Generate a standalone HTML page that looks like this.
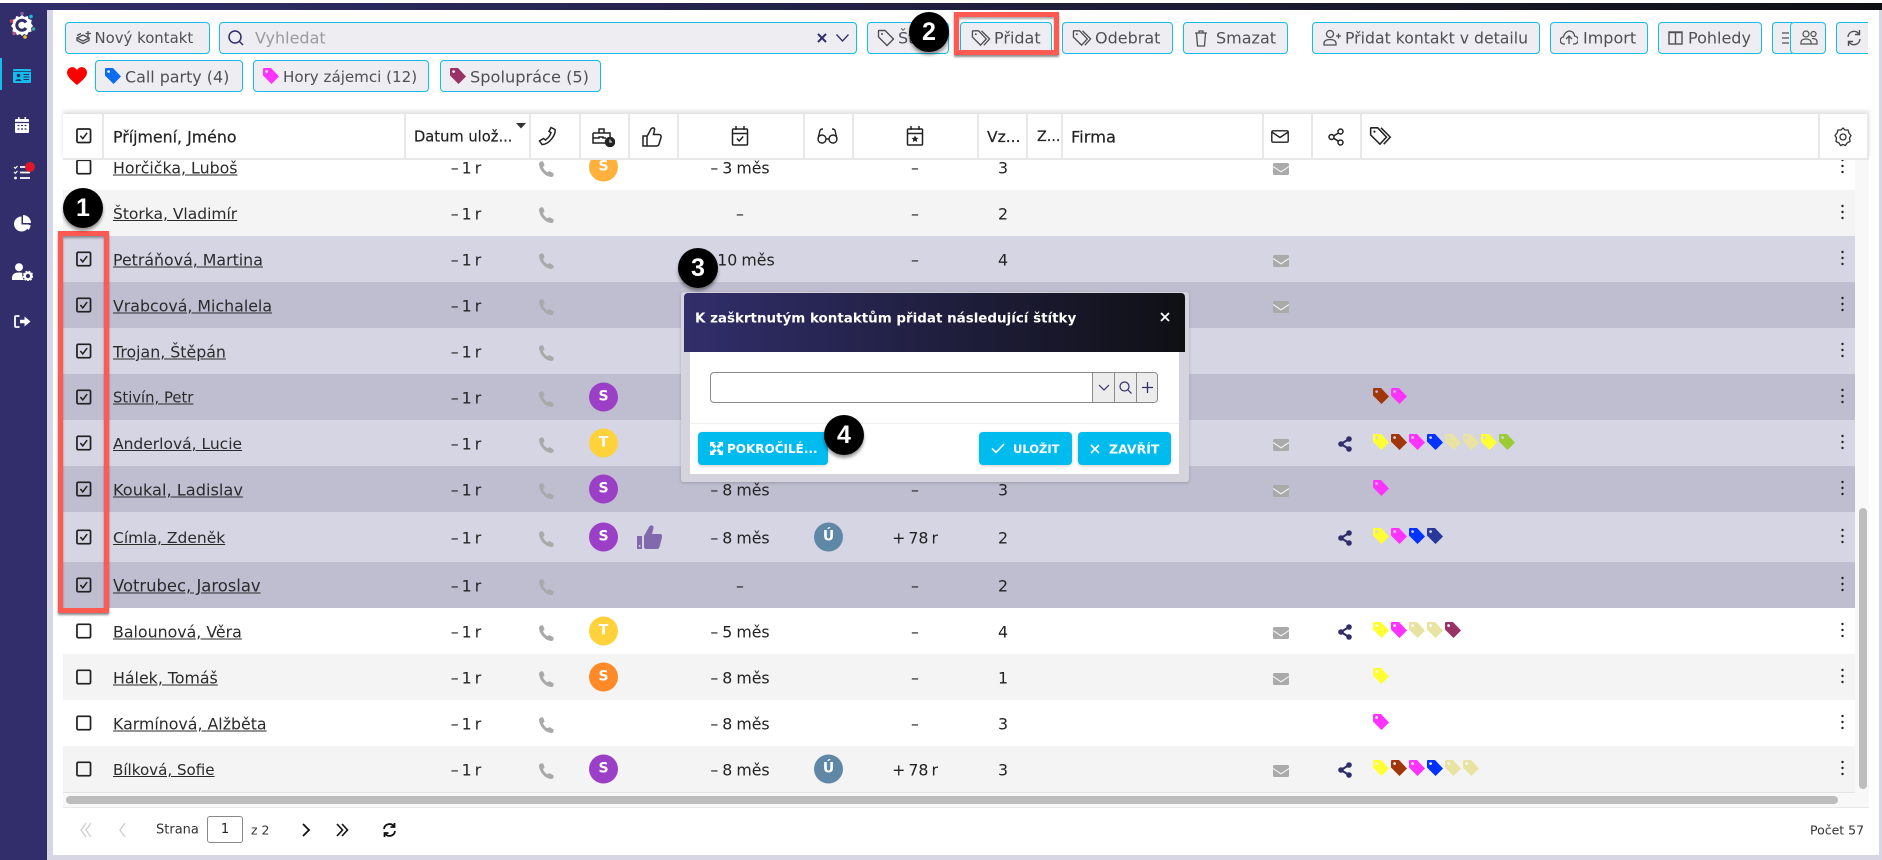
<!DOCTYPE html>
<html lang="cs"><head><meta charset="utf-8"><title>Kontakty</title>
<style>
html,body{margin:0;padding:0;width:1882px;height:860px;overflow:hidden;background:#fff}
body{position:relative;font-family:"DejaVu Sans","Liberation Sans",sans-serif;font-size:15.8px;color:#222}
.a{position:absolute}
svg{display:block}
.top{left:0;top:3px;width:1882px;height:7px;background:linear-gradient(90deg,#312e6b,#0f1014)}
.side{left:0;top:3px;width:47px;height:857px;background:#312e6b}
.lav{background:#d7d6e4}
.btn{position:absolute;box-sizing:border-box;top:22px;height:32px;background:#eeeef2;border:1.5px solid #12bde9;border-radius:4px;color:#4f4f57}
.tb{top:60px}
.t{position:absolute;white-space:nowrap}
.btn .t{top:50%;transform:translateY(-50%);font-size:16px}
.tb .t{margin-top:1px}
.btn svg{position:absolute}
.hd{left:63px;top:114px;width:1806px;height:44px;background:#fff;box-shadow:0 -3px 4px rgba(0,0,0,.12);border-bottom:2px solid #e8e8e8;z-index:3}
.hd i{position:absolute;top:0;width:1.5px;height:44px;background:#e8e8e8}
.hd .t{top:50%;transform:translateY(-50%);margin-top:1px;color:#222;font-size:15.8px;-webkit-text-stroke:.2px #222}
.hd svg{position:absolute}
.r{position:absolute;left:63px;width:1792px}
.r>*{position:absolute;top:50%;transform:translateY(-50%)}
.w{background:#fff}.g{background:#f4f4f4}.s1{background:#d6d5e3}.s2{background:#bfbed0}
.h46{height:46px}.h50{height:50px}
.c{left:13px;width:15.5px;height:15.5px}
.n{left:50px;color:#2a2a2a;text-decoration:underline;white-space:nowrap;margin-top:1px}
.d{left:363px;width:80px;text-align:center;margin-top:1px;word-spacing:-2px}
.p{left:475px;width:16px;height:16px;margin-top:2px}
.o{left:526px;width:29px;height:29px;border-radius:50%;color:#fff;font-weight:700;font-size:14px;line-height:29px;text-align:center}
.m{left:607px;width:140px;text-align:center;margin-top:1px;word-spacing:-1px}
.u{left:751px;width:29px;height:29px;border-radius:50%;background:#5f88a6;color:#fff;font-weight:700;font-size:14px;line-height:29px;text-align:center}
.x{left:802px;width:100px;text-align:center;margin-top:1px;word-spacing:-2px}
.v{left:920px;width:40px;text-align:center;margin-top:1px}
.ml{left:1210px;width:16px;height:12px;margin-top:2px}
.sh{left:1275px;width:14px;height:16px;margin-top:1px}
.tg{left:1310px;height:16px;display:flex;gap:2px;margin-top:-1px}
.tg svg{width:16px;height:16px}
.kb{left:1778px;width:3px;height:15px;margin-top:-1px}
.o1{background:#ffb13b}.o2{background:#9b3fc7}.o3{background:#ffd23c}.o4{background:#ff8a27}
.y{fill:#ffff33}.b{fill:#a0360a}.f{fill:#ff33ff}.l{fill:#0033ff}.k{fill:#e8e3a0}.e{fill:#9ccc33}.q{fill:#993366}.na{fill:#27399a}
.red{position:absolute;border:5px solid #ff5a52;box-sizing:border-box;box-shadow:0 2px 2px rgba(0,0,0,.45),inset 0 2px 2px rgba(0,0,0,.35);z-index:6}
.bd{position:absolute;width:40px;height:40px;border-radius:50%;background:#000;color:#fff;font:700 25px/40px "Liberation Sans",sans-serif;text-align:center;box-shadow:0 3px 3px rgba(0,0,0,.4);z-index:9}
.mb{position:absolute;top:432px;height:33px;background:#00bbee;border-radius:4px;color:#fff;font-weight:700;font-size:12.5px;box-shadow:0 1px 3px rgba(0,0,0,.2)}
.mb .t{top:50%;transform:translateY(-50%)}
.mb svg{position:absolute}
</style></head><body>
<svg width="0" height="0" style="position:absolute">
<defs>
<symbol id="tag" viewBox="0 0 16 16"><path fill-rule="evenodd" d="M1 0H8L16 8.5 8.5 16 0 7.5V1Q0 0 1 0ZM3.6 2.2a1.4 1.4 0 1 0 .01 0Z"/></symbol>
<symbol id="ph" viewBox="0 0 16 16"><path fill="#a9a9a9" d="M2.2.6 5 .2 6.6 4.4 5 6C5.6 8.2 7.400 10.200 9.600 11.300L11.200 10 15.600 12.400 15.400 15.200 13.600 16C7.400 15.800 1 8.800 1 2.200Z"/></symbol>
<symbol id="mail" viewBox="0 0 16 12"><rect width="16" height="12" rx="1.500" fill="#aaa"/><path d="M0 3.500 8 8.800 16 3.500" fill="none" stroke="#f4f4f4" stroke-width="1.100"/></symbol>
<symbol id="share" viewBox="0 0 14 16"><path d="M11 3 3 8l8 5" fill="none" stroke="#312e6b" stroke-width="2.200"/><circle cx="11" cy="3" r="2.800" fill="#312e6b"/><circle cx="3" cy="8" r="2.800" fill="#312e6b"/><circle cx="11" cy="13" r="2.800" fill="#312e6b"/></symbol>
<symbol id="kb" viewBox="0 0 3 15"><circle cx="1.500" cy="1.500" r="1.200" fill="#222"/><circle cx="1.500" cy="7.500" r="1.200" fill="#222"/><circle cx="1.500" cy="13.500" r="1.200" fill="#222"/></symbol>
<symbol id="on" viewBox="0 0 16 16"><rect x="1" y="1" width="14" height="14" rx="1.500" fill="none" stroke="#222" stroke-width="1.800"/><path d="M4.500 8 7 11l4.500-6" fill="none" stroke="#222" stroke-width="1.600"/></symbol>
<symbol id="off" viewBox="0 0 16 16"><rect x="1" y="1" width="14" height="14" rx="1.500" fill="none" stroke="#222" stroke-width="1.800"/></symbol>
<symbol id="tago" viewBox="0 0 18 18"><path d="M2 1.500H8L16.500 10 10 16.500 1.500 8V2Q1.500 1.500 2 1.500Z" fill="none" stroke="currentColor" stroke-width="1.400"/><circle cx="5" cy="5" r="1" fill="currentColor"/></symbol>
<symbol id="tago2" viewBox="0 0 22 18"><path d="M2 1.500H8L16 10 10 16.500 1.500 8V2Q1.500 1.500 2 1.500Z" fill="none" stroke="currentColor" stroke-width="1.400"/><path d="M11 1.500 19.500 10 13.500 16.500" fill="none" stroke="currentColor" stroke-width="1.400"/><circle cx="5" cy="5" r="1" fill="currentColor"/></symbol>
</defs></svg>

<div class="a top"></div>
<div class="a side"></div>
<div class="a lav" style="left:47px;top:10px;width:6px;height:850px"></div>
<div class="a lav" style="left:47px;top:855px;width:1835px;height:5px"></div>
<div class="a lav" style="left:1879px;top:10px;width:3px;height:850px"></div>

<!-- sidebar -->
<svg class="a" style="left:8px;top:11px" width="28" height="28" viewBox="0 0 28 28"><path fill="#fff" d="M14 4l2.500 2 3.200-1 1 3 3 1-.6 3.200L25 15l-2 2.300.6 3.200-3.200.7-1.400 3-3-1.200-2 2-2-2-3 1.200-1.400-3-3.200-.7.6-3.200L3 15l1.900-2.800L4.300 9l3-1 1-3 3.200 1z"/><path d="M18 11.500a5 5 0 1 0 0 5.500" fill="none" stroke="#312e6b" stroke-width="3"/><circle cx="14" cy="2.500" r="1.800" fill="#7b5ea7"/><circle cx="23" cy="5.500" r="1.800" fill="#12bde9"/><circle cx="3.500" cy="10" r="1.800" fill="#c0444c"/><circle cx="25.500" cy="18" r="1.800" fill="#3aa99f"/><circle cx="6" cy="22.500" r="1.800" fill="#b0558e"/><circle cx="17" cy="26" r="1.800" fill="#f1c232"/></svg>
<div class="a" style="left:0;top:58px;width:1.500px;height:32px;background:#12bde9"></div>
<svg class="a" style="left:13px;top:69px" width="18" height="14" viewBox="0 0 18 14"><rect width="18" height="14" rx="1" fill="#12bde9"/><rect y="2" width="18" height=".8" fill="#312e6b"/><circle cx="5.500" cy="6.500" r="1.800" fill="#312e6b"/><path d="M2.500 12c0-2.500 6-2.500 6 0z" fill="#312e6b"/><path d="M10.500 5.500h5.500M10.500 8h5.500M10.500 10.500h5.500" stroke="#312e6b" stroke-width="1.100"/></svg>
<svg class="a" style="left:15px;top:117px" width="14" height="16" viewBox="0 0 14 16"><path fill="#fff" d="M3 0h1.500v2h5V0H11v2h2a1 1 0 0 1 1 1v12a1 1 0 0 1-1 1H1a1 1 0 0 1-1-1V3a1 1 0 0 1 1-1h2z"/><path d="M0 5.500h14M2.500 8.500h2M6 8.500h2M9.500 8.500h2M2.500 12h2M6 12h2M9.500 12h2" stroke="#312e6b" stroke-width="1.300"/></svg>
<svg class="a" style="left:13px;top:161px" width="22" height="20" viewBox="0 0 22 20"><path d="M1 6l1.300 1.300L4.500 5M1 11l1.300 1.300L4.500 10" fill="none" stroke="#fff" stroke-width="1.200"/><circle cx="2.500" cy="17" r="1.400" fill="#fff"/><path d="M7 6h9M7 11.500h10M7 17h10" stroke="#fff" stroke-width="1.800"/><circle cx="17" cy="6" r="5" fill="#e0162a"/></svg>
<svg class="a" style="left:14px;top:215px" width="17" height="17" viewBox="0 0 17 17"><path fill="#fff" d="M7.500 1.500A7.500 7.500 0 1 0 15 9.500H7.500z"/><path fill="#fff" d="M9 0a8 8 0 0 1 8 8H9z"/><path fill="#fff" d="M10 10h6.500a7.500 7.500 0 0 1-2 5z"/></svg>
<svg class="a" style="left:12px;top:263px" width="21" height="18" viewBox="0 0 21 18"><circle cx="7" cy="4.200" r="4" fill="#fff"/><path fill="#fff" d="M0 17v-2c0-4 3-5.500 7-5.500 1.500 0 2.500.2 3.400.5-.5 2 0 5 1.600 7z"/><circle cx="16" cy="13" r="3.300" fill="none" stroke="#fff" stroke-width="2.400"/><circle cx="16" cy="13" r="4.800" fill="none" stroke="#fff" stroke-width="1.100" stroke-dasharray="1.800 1.500"/></svg>
<svg class="a" style="left:14px;top:315px" width="17" height="13" viewBox="0 0 17 13"><path d="M5.500 1H2a1 1 0 0 0-1 1v9a1 1 0 0 0 1 1h3.500" fill="none" stroke="#fff" stroke-width="1.800"/><path fill="#fff" d="M6 4.800h4.500V1.500L16.500 6.500l-6 5V8.200H6z"/></svg>

<!-- toolbar -->
<div class="btn" style="left:65px;width:145px"><svg style="left:10px;top:7px" width="16" height="15" viewBox="0 0 16 15" fill="none" stroke="#4f4f57" stroke-width="1.300"><path d="M1 8l6-3 6 3-6 3zM1 8v2.500l6 3 6-3V8M1 5.500L5 3.500M12 1v6M9.500 3.500H15"/></svg><span class="t" style="left:28.500px;font-size:14.900px">Nový kontakt</span></div>
<div class="btn" style="left:219px;width:638px"><svg style="left:7px;top:6px" width="18" height="18" viewBox="0 0 18 18" fill="none" stroke="#312e6b" stroke-width="1.500"><circle cx="8" cy="8" r="6"/><path d="M12.500 12.500 16 16"/></svg><span class="t" style="left:35px;color:#9b9b9f">Vyhledat</span><svg style="left:596px;top:9px" width="12" height="12" viewBox="0 0 12 12"><path d="M2 2l8 8M10 2l-8 8" stroke="#312e6b" stroke-width="2"/></svg><svg style="left:615px;top:10px" width="15" height="10" viewBox="0 0 15 10" fill="none" stroke="#312e6b" stroke-width="1.300"><path d="M1.500 1.500 7.500 8l6-6.500"/></svg></div>
<div class="btn" style="left:867px;width:82px;color:#4f4f57"><svg style="left:9px;top:6px;color:#4f4f57" width="18" height="18"><use href="#tago"/></svg><span class="t" style="left:30px">Štítky</span></div>
<div class="btn" style="left:960px;width:92px"><svg style="left:10px;top:6px;color:#4f4f57" width="21" height="18"><use href="#tago2"/></svg><span class="t" style="left:33px">Přidat</span></div>
<div class="btn" style="left:1062px;width:111px"><svg style="left:9px;top:6px;color:#4f4f57" width="21" height="18"><use href="#tago2"/></svg><span class="t" style="left:32px">Odebrat</span></div>
<div class="btn" style="left:1183px;width:105px"><svg style="left:10px;top:6px" width="14" height="18" viewBox="0 0 14 18" fill="none" stroke="#4f4f57" stroke-width="1.300"><path d="M1 4h12M5 4V2h4v2M2.500 4l1 13h7l1-13"/></svg><span class="t" style="left:32px">Smazat</span></div>
<div class="btn" style="left:1312px;width:228px"><svg style="left:10px;top:6px" width="19" height="18" viewBox="0 0 19 18" fill="none" stroke="#4f4f57" stroke-width="1.300"><circle cx="7" cy="5" r="3.500"/><path d="M1 16v-1.500c0-3 3-4 6-4s6 1 6 4V16zM13 7h5M15.500 4.500v5"/></svg><span class="t" style="left:32px;font-size:15.700px">Přidat kontakt v detailu</span></div>
<div class="btn" style="left:1550px;width:98px"><svg style="left:9px;top:7px" width="18" height="15" viewBox="0 0 18 15" fill="none" stroke="#4f4f57" stroke-width="1.300"><path d="M5 14H4a3.500 3.500 0 0 1-.5-7C4 3.500 7 1 9.500 1c3 0 5 2.500 5 5a3.500 3.500 0 0 1-.5 8h-1M9 14V6M6 9l3-3 3 3"/></svg><span class="t" style="left:32px">Import</span></div>
<div class="btn" style="left:1658px;width:104px"><svg style="left:9px;top:8px" width="15" height="14" viewBox="0 0 15 14" fill="none" stroke="#4f4f57" stroke-width="1.400"><rect x="1" y="1" width="13" height="12"/><path d="M7.500 1v12M1 1.500h13" /></svg><span class="t" style="left:29px">Pohledy</span></div>
<div class="btn" style="left:1772px;width:20px;border-right:0;border-radius:4px 0 0 4px"><svg style="left:9px;top:9px" width="7" height="12" viewBox="0 0 7 12"><path d="M0 1h7M0 6h7M0 11h7" stroke="#4f4f57" stroke-width="1.300"/></svg></div>
<div class="btn" style="left:1790px;width:36px"><svg style="left:9px;top:7px" width="18" height="15" viewBox="0 0 18 15" fill="none" stroke="#4f4f57" stroke-width="1.200"><circle cx="6" cy="4" r="3"/><circle cx="13.500" cy="4" r="2.500"/><path d="M1 14v-2c0-2 2.500-3 5-3s5 1 5 3v2zM12 8.500c3 0 5 .8 5 3V14h-6"/></svg></div>
<div class="btn" style="left:1836px;width:32px;border-right:0;border-radius:4px 0 0 4px"><svg style="left:9px;top:6px" width="16" height="18" viewBox="0 0 16 18" fill="none" stroke="#4f4f57" stroke-width="1.400"><path d="M2 8a6 6 0 0 1 11-3M14 10a6 6 0 0 1-11 3M13.500 1v4.500H9M2.500 17v-4.500H7"/></svg></div>

<svg class="a" style="left:67px;top:67px" width="20" height="18" viewBox="0 0 20 18"><path fill="#ff0000" d="M10 18C4 13 0 9.500 0 5.500A5.300 5.300 0 0 1 10 3a5.300 5.300 0 0 1 10 2.500C20 9.500 16 13 10 18Z"/></svg>
<div class="btn tb" style="left:95px;width:148px"><svg style="left:9px;top:7px;fill:#0a6df0" width="16" height="16"><use href="#tag"/></svg><span class="t" style="left:29px;font-size:15.900px">Call party (4)</span></div>
<div class="btn tb" style="left:253px;width:176px"><svg style="left:9px;top:7px;fill:#ff33ff" width="16" height="16"><use href="#tag"/></svg><span class="t" style="left:29px;font-size:15.100px">Hory zájemci (12)</span></div>
<div class="btn tb" style="left:440px;width:161px"><svg style="left:9px;top:7px;fill:#993366" width="16" height="16"><use href="#tag"/></svg><span class="t" style="left:29px;font-size:16.200px">Spolupráce (5)</span></div>

<!-- table -->
<div class="a" style="left:63px;top:158px;width:1806px;height:649px;background:#f8f8f8;border-bottom:1.500px solid #e8e8e8"></div>

<div class="r w h46" style="top:144px"><svg class="c"><use href="#off"/></svg><span class="n">Horčička, Luboš</span><span class="d">– 1 r</span><svg class="p"><use href="#ph"/></svg><span class="o o1">S</span><span class="m">– 3 měs</span><span class="x">–</span><span class="v">3</span><svg class="ml"><use href="#mail"/></svg><svg class="kb"><use href="#kb"/></svg></div>
<div class="r g h46" style="top:190px"><span class="n" style="font-size:15.500px">Štorka, Vladimír</span><span class="d">– 1 r</span><svg class="p"><use href="#ph"/></svg><span class="m">–</span><span class="x">–</span><span class="v">2</span><svg class="kb"><use href="#kb"/></svg></div>
<div class="r s1 h46" style="top:236px"><svg class="c"><use href="#on"/></svg><span class="n">Petráňová, Martina</span><span class="d">– 1 r</span><svg class="p"><use href="#ph"/></svg><span class="m">– 10 měs</span><span class="x">–</span><span class="v">4</span><svg class="ml"><use href="#mail"/></svg><svg class="kb"><use href="#kb"/></svg></div>
<div class="r s2 h46" style="top:282px"><svg class="c"><use href="#on"/></svg><span class="n">Vrabcová, Michalela</span><span class="d">– 1 r</span><svg class="p"><use href="#ph"/></svg><svg class="ml"><use href="#mail"/></svg><svg class="kb"><use href="#kb"/></svg></div>
<div class="r s1 h46" style="top:328px"><svg class="c"><use href="#on"/></svg><span class="n">Trojan, Štěpán</span><span class="d">– 1 r</span><svg class="p"><use href="#ph"/></svg><svg class="kb"><use href="#kb"/></svg></div>
<div class="r s2 h46" style="top:374px"><svg class="c"><use href="#on"/></svg><span class="n" style="font-size:14.800px">Stivín, Petr</span><span class="d">– 1 r</span><svg class="p"><use href="#ph"/></svg><span class="o o2">S</span><span class="tg"><svg class="b"><use href="#tag"/></svg><svg class="f"><use href="#tag"/></svg></span><svg class="kb"><use href="#kb"/></svg></div>
<div class="r s1 h46" style="top:420px"><svg class="c"><use href="#on"/></svg><span class="n" style="font-size:15.500px">Anderlová, Lucie</span><span class="d">– 1 r</span><svg class="p"><use href="#ph"/></svg><span class="o o3">T</span><svg class="ml"><use href="#mail"/></svg><svg class="sh"><use href="#share"/></svg><span class="tg"><svg class="y"><use href="#tag"/></svg><svg class="b"><use href="#tag"/></svg><svg class="f"><use href="#tag"/></svg><svg class="l"><use href="#tag"/></svg><svg class="k"><use href="#tag"/></svg><svg class="k"><use href="#tag"/></svg><svg class="y"><use href="#tag"/></svg><svg class="e"><use href="#tag"/></svg></span><svg class="kb"><use href="#kb"/></svg></div>
<div class="r s2 h46" style="top:466px"><svg class="c"><use href="#on"/></svg><span class="n" style="font-size:16.200px">Koukal, Ladislav</span><span class="d">– 1 r</span><svg class="p"><use href="#ph"/></svg><span class="o o2">S</span><span class="m">– 8 měs</span><span class="x">–</span><span class="v">3</span><svg class="ml"><use href="#mail"/></svg><span class="tg"><svg class="f"><use href="#tag"/></svg></span><svg class="kb"><use href="#kb"/></svg></div>
<div class="r s1 h50" style="top:512px"><svg class="c"><use href="#on"/></svg><span class="n" style="font-size:15.500px">Címla, Zdeněk</span><span class="d">– 1 r</span><svg class="p"><use href="#ph"/></svg><span class="o o2">S</span><svg style="left:574px" width="25" height="24" viewBox="0 0 25 24"><path fill="#8268ad" d="M0 11h5v13H0zM7 11 12 2c2-3 5-1.500 4.500 1L15 9h8c2 0 2.500 2 2 3.500L22.500 22c-.5 1.500-1.500 2-3 2H10c-2 0-3-1-3-2z"/><rect x="1.800" y="20" width="1.500" height="1.800" fill="#d6d5e3"/></svg><span class="m">– 8 měs</span><span class="u">Ú</span><span class="x">+ 78 r</span><span class="v">2</span><svg class="sh"><use href="#share"/></svg><span class="tg"><svg class="y"><use href="#tag"/></svg><svg class="f"><use href="#tag"/></svg><svg class="l"><use href="#tag"/></svg><svg class="na"><use href="#tag"/></svg></span><svg class="kb"><use href="#kb"/></svg></div>
<div class="r s2 h46" style="top:562px"><svg class="c"><use href="#on"/></svg><span class="n" style="font-size:16.400px">Votrubec, Jaroslav</span><span class="d">– 1 r</span><svg class="p"><use href="#ph"/></svg><span class="m">–</span><span class="x">–</span><span class="v">2</span><svg class="kb"><use href="#kb"/></svg></div>
<div class="r w h46" style="top:608px"><svg class="c"><use href="#off"/></svg><span class="n">Balounová, Věra</span><span class="d">– 1 r</span><svg class="p"><use href="#ph"/></svg><span class="o o3">T</span><span class="m">– 5 měs</span><span class="x">–</span><span class="v">4</span><svg class="ml"><use href="#mail"/></svg><svg class="sh"><use href="#share"/></svg><span class="tg"><svg class="y"><use href="#tag"/></svg><svg class="f"><use href="#tag"/></svg><svg class="k"><use href="#tag"/></svg><svg class="k"><use href="#tag"/></svg><svg class="q"><use href="#tag"/></svg></span><svg class="kb"><use href="#kb"/></svg></div>
<div class="r g h46" style="top:654px"><svg class="c"><use href="#off"/></svg><span class="n">Hálek, Tomáš</span><span class="d">– 1 r</span><svg class="p"><use href="#ph"/></svg><span class="o o4">S</span><span class="m">– 8 měs</span><span class="x">–</span><span class="v">1</span><svg class="ml"><use href="#mail"/></svg><span class="tg"><svg class="y"><use href="#tag"/></svg></span><svg class="kb"><use href="#kb"/></svg></div>
<div class="r w h46" style="top:700px"><svg class="c"><use href="#off"/></svg><span class="n">Karmínová, Alžběta</span><span class="d">– 1 r</span><svg class="p"><use href="#ph"/></svg><span class="m">– 8 měs</span><span class="x">–</span><span class="v">3</span><span class="tg"><svg class="f"><use href="#tag"/></svg></span><svg class="kb"><use href="#kb"/></svg></div>
<div class="r g h46" style="top:746px"><svg class="c"><use href="#off"/></svg><span class="n" style="font-size:15.100px">Bílková, Sofie</span><span class="d">– 1 r</span><svg class="p"><use href="#ph"/></svg><span class="o o2">S</span><span class="m">– 8 měs</span><span class="u">Ú</span><span class="x">+ 78 r</span><span class="v">3</span><svg class="ml"><use href="#mail"/></svg><svg class="sh"><use href="#share"/></svg><span class="tg"><svg class="y"><use href="#tag"/></svg><svg class="b"><use href="#tag"/></svg><svg class="f"><use href="#tag"/></svg><svg class="l"><use href="#tag"/></svg><svg class="k"><use href="#tag"/></svg><svg class="k"><use href="#tag"/></svg></span><svg class="kb"><use href="#kb"/></svg></div>

<div class="a" style="left:63px;top:792px;width:1792px;height:1px;background:#e4e4e4"></div>
<div class="a" style="left:66px;top:796px;width:1772px;height:8px;border-radius:4px;background:#bdbdbd"></div>
<div class="a" style="left:1859px;top:508px;width:8px;height:281px;border-radius:4px;background:#bdbdbd"></div>

<!-- header -->
<div class="a hd">
<i style="left:39px"></i><i style="left:341px"></i><i style="left:466px"></i><i style="left:516px"></i><i style="left:565px"></i><i style="left:614px"></i><i style="left:740px"></i><i style="left:789px"></i><i style="left:914px"></i><i style="left:963px"></i><i style="left:998px"></i><i style="left:1199px"></i><i style="left:1248px"></i><i style="left:1297px"></i><i style="left:1755px"></i><i style="left:1804px"></i>
<svg style="left:13px;top:14px" width="15.500" height="15.500"><use href="#on"/></svg>
<span class="t" style="left:50px">Příjmení, Jméno</span>
<span class="t" style="left:351px;font-size:14.700px">Datum ulož...</span>
<svg style="left:452px;top:9px" width="12" height="6"><path d="M1 0h10L6 5.500z" fill="#333"/></svg>
<svg style="left:475px;top:12px" width="20" height="20" viewBox="0 0 20 20" fill="none" stroke="#222" stroke-width="1.500"><path d="M13 1.500 17 3.500C18 9 11 18.500 4 18.500L1.500 15 5.500 12.500 7.500 14C10 12 12.500 9 13 6.500L11 5.500Z"/></svg>
<svg style="left:529px;top:13px" width="23" height="20" viewBox="0 0 23 20" fill="none" stroke="#222" stroke-width="1.500"><path d="M1 6h17v5M1 6v10h12M1 11h6v-1h4v1h3M7 6V2h5v4"/><circle cx="18" cy="15" r="4.500" fill="#222"/><path d="M18 12.500V15h2" stroke="#fff" stroke-width="1"/></svg>
<svg style="left:579px;top:13px" width="20" height="20" viewBox="0 0 20 20" fill="none" stroke="#222" stroke-width="1.500"><path d="M1 9h4v10H1zM5 9.500 9 2c1.500-2 4-1 3.500 1L11.500 7.500H17c1.500 0 2.500 1.500 2 3L17 17c-.5 1.500-1 2-2.500 2H5"/></svg>
<svg style="left:668px;top:12px" width="18" height="20" viewBox="0 0 18 20" fill="none" stroke="#222" stroke-width="1.500"><rect x="1.500" y="3" width="15" height="16" rx="1"/><path d="M1.500 7.500h15M5 0v4M13 0v4M6 12.500 8.200 15l4-4.500"/></svg>
<svg style="left:754px;top:14px" width="21" height="16" viewBox="0 0 21 16" fill="none" stroke="#222" stroke-width="1.400"><circle cx="5" cy="11" r="4"/><circle cx="16" cy="11" r="4"/><path d="M9 11h3M1 11 3 2.500C3.500 1 5 1 6 1M20 11 18 2.500C17.500 1 16 1 15 1"/></svg>
<svg style="left:843px;top:12px" width="18" height="20" viewBox="0 0 18 20" fill="none" stroke="#222" stroke-width="1.500"><rect x="1.500" y="3" width="15" height="16" rx="1"/><path d="M1.500 7.500h15M5 0v4M13 0v4"/><path d="m9 9.500 1.100 2.200 2.400.3-1.800 1.600.5 2.400L9 14.800 6.800 16l.5-2.400L5.500 12l2.400-.3z" fill="#222" stroke="none"/></svg>
<span class="t" style="left:924px;font-size:15.500px">Vz...</span>
<span class="t" style="left:974px;font-size:14.300px">Z...</span>
<span class="t" style="left:1008px;font-size:16.300px">Firma</span>
<svg style="left:1208px;top:16px" width="18" height="13" viewBox="0 0 18 13" fill="none" stroke="#222" stroke-width="1.400"><rect x=".8" y=".8" width="16.400" height="11.400" rx="1.200"/><path d="M.8 2 9 7.500 17.200 2"/></svg>
<svg style="left:1265px;top:14px" width="17" height="18" viewBox="0 0 17 18" fill="none" stroke="#222" stroke-width="1.500"><circle cx="12.500" cy="3.500" r="2.500"/><circle cx="3.500" cy="9" r="2.500"/><circle cx="12.500" cy="14.500" r="2.500"/><path d="M10.500 5 5.500 8M5.500 10.200l5 3"/></svg>
<svg style="left:1306px;top:12px;color:#222" width="24" height="20"><use href="#tago2"/></svg>
<svg style="left:1771px;top:13px" width="18" height="20" viewBox="0 0 18 20" fill="none" stroke="#333" stroke-width="1.300"><path d="M9 1 11 3h3l1 3 2 2.500L15.500 11l.5 3.500L13 16l-1.500 2.500L9 17.500 6.500 18.500 5 16 2 14.500 2.500 11 1 8.500 3 6l1-3h3z"/><circle cx="9" cy="10" r="3"/></svg>
</div>

<!-- footer -->
<svg class="a" style="left:79px;top:822px" width="14" height="16" viewBox="0 0 14 16" fill="none" stroke="#d2d2d2" stroke-width="1.500"><path d="M7 1 2 8l5 7M12 1 7 8l5 7"/></svg>
<svg class="a" style="left:118px;top:822px" width="8" height="16" viewBox="0 0 8 16" fill="none" stroke="#d2d2d2" stroke-width="1.500"><path d="M7 1 2 8l5 7"/></svg>
<span class="t" style="left:156px;top:830px;transform:translateY(-50%);font-size:13px;color:#333">Strana</span>
<div class="a" style="left:207px;top:816px;width:36px;height:27px;box-sizing:border-box;border:1px solid #888;border-radius:3px;text-align:center;line-height:25px;font-size:13px">1</div>
<span class="t" style="left:251px;top:830px;transform:translateY(-50%);font-size:12.500px;color:#333">z 2</span>
<svg class="a" style="left:301px;top:823px" width="9" height="14" viewBox="0 0 9 14" fill="none" stroke="#111" stroke-width="1.800"><path d="M2 1l6 6-6 6"/></svg>
<svg class="a" style="left:336px;top:823px" width="13" height="14" viewBox="0 0 13 14" fill="none" stroke="#111" stroke-width="1.600"><path d="M1 1l5.500 6L1 13M6 1l5.500 6L6 13"/></svg>
<svg class="a" style="left:382px;top:822px" width="15" height="16" viewBox="0 0 15 16" fill="none" stroke="#111" stroke-width="1.800"><path d="M2 7a5.500 5.500 0 0 1 10-2.500M13 9a5.500 5.500 0 0 1-10 2.500M12.500 1v4H8.500M2.500 15v-4h4"/></svg>
<span class="t" style="left:1810px;top:830px;transform:translateY(-50%);font-size:12.500px;color:#333">Počet 57</span>

<!-- modal -->
<div class="a" style="left:681px;top:292px;width:508px;height:190px;background:#d5d4dc;border-radius:3px;box-shadow:0 1px 3px rgba(0,0,0,.2);z-index:4"></div>
<div class="a" style="left:684px;top:293px;width:501px;height:59px;border-radius:4px 4px 0 0;background:linear-gradient(90deg,#312e6b,#0f1014);z-index:5"><span class="t" style="left:11px;top:26px;transform:translateY(-50%);color:#fff;font-weight:700;font-size:13.450px">K zaškrtnutým kontaktům přidat následující štítky</span><svg class="a" style="left:476px;top:19px" width="10" height="10" viewBox="0 0 10 10"><path d="M1 1l8 8M9 1 1 9" stroke="#fff" stroke-width="1.800"/></svg></div>
<div class="a" style="left:690px;top:352px;width:489px;height:122px;background:#fff;z-index:5">
<div class="a" style="left:20px;top:20px;width:448px;height:31px;box-sizing:border-box;border:1px solid #8a8a8a;border-radius:4px;overflow:hidden">
<div class="a" style="left:381px;top:0;width:66px;height:29px;background:#ececec"></div>
<div class="a" style="left:381px;top:0;width:1px;height:29px;background:#8a8a8a"></div><div class="a" style="left:403px;top:0;width:1px;height:29px;background:#8a8a8a"></div><div class="a" style="left:425px;top:0;width:1px;height:29px;background:#8a8a8a"></div>
<svg class="a" style="left:387px;top:11px" width="12" height="8" viewBox="0 0 12 8" fill="none" stroke="#312e6b" stroke-width="1.200"><path d="M1 1l5 5 5-5"/></svg>
<svg class="a" style="left:408px;top:8px" width="13" height="13" viewBox="0 0 13 13" fill="none" stroke="#312e6b" stroke-width="1.200"><circle cx="5.500" cy="5.500" r="4.500"/><path d="M9 9l3.500 3.500"/></svg>
<svg class="a" style="left:431px;top:9px" width="11" height="11" viewBox="0 0 11 11"><path d="M5.500 0v11M0 5.500h11" stroke="#312e6b" stroke-width="1.300"/></svg>
</div>
<div class="a" style="left:0;top:71px;width:489px;height:1px;background:#eee"></div>
</div>
<div class="mb" style="left:698px;width:130px;z-index:6"><svg style="left:12px;top:10px" width="13" height="13" viewBox="0 0 13 13"><path fill="#fff" d="M0 0h5L3.500 1.500 6.500 4.500 4.500 6.500 1.500 3.500 0 5zM13 0v5L11.500 3.500 8.500 6.500 6.500 4.500 9.500 1.500 8 0zM0 13V8L1.500 9.500 4.500 6.500 6.500 8.500 3.500 11.500 5 13zM13 13H8L9.500 11.500 6.500 8.500 8.500 6.500 11.500 9.500 13 8z"/></svg><span class="t" style="left:29px;font-size:12px">POKROČILÉ...</span></div>
<div class="mb" style="left:979px;width:93px;z-index:6"><svg style="left:12px;top:11px" width="14" height="11" viewBox="0 0 14 11" fill="none" stroke="#fff" stroke-width="1.600"><path d="M1 5.500 5 9.500 13 1"/></svg><span class="t" style="left:34px;font-size:11.500px">ULOŽIT</span></div>
<div class="mb" style="left:1078px;width:93px;z-index:6"><svg style="left:12px;top:12px" width="10" height="10" viewBox="0 0 10 10"><path d="M1 1l8 8M9 1 1 9" stroke="#fff" stroke-width="1.600"/></svg><span class="t" style="left:31px">ZAVŘÍT</span></div>

<!-- annotations -->
<div class="red" style="left:58px;top:231px;width:51px;height:382px"></div>
<div class="red" style="left:954px;top:12px;width:105px;height:43px"></div>
<div class="bd" style="left:63px;top:188px">1</div>
<div class="bd" style="left:909px;top:12px">2</div>
<div class="bd" style="left:678px;top:248px">3</div>
<div class="bd" style="left:824px;top:415px">4</div>
</body></html>
